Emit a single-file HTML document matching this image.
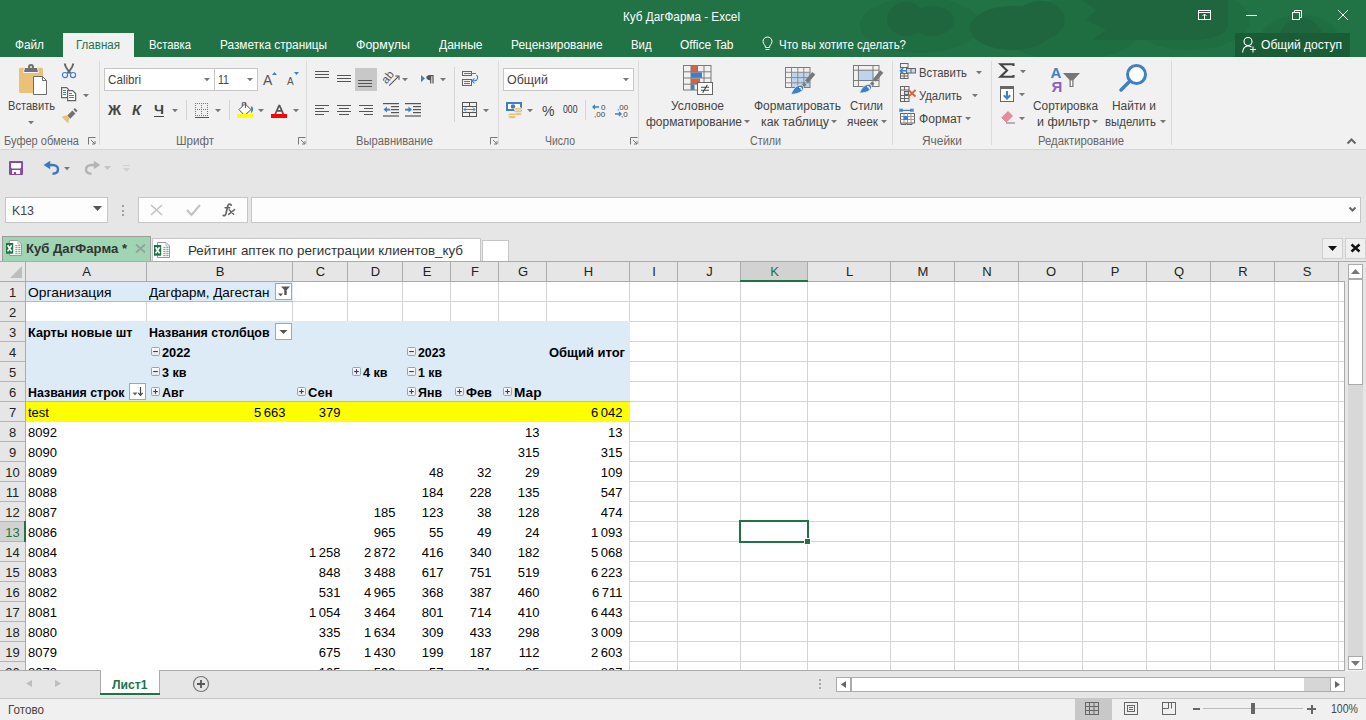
<!DOCTYPE html><html><head><meta charset="utf-8"><style>
*{margin:0;padding:0}
html,body{width:1366px;height:720px;overflow:hidden;background:#F3F3F3}
body{position:relative;font-family:"Liberation Sans",sans-serif}
.f{position:absolute;white-space:nowrap;transform-origin:0 0}
.r{position:absolute;white-space:nowrap}
.c{position:absolute;text-align:center;white-space:nowrap}
svg{overflow:visible}
</style></head><body><div style="position:absolute;left:0px;top:0px;width:1366px;height:57px;background:#217346;overflow:hidden"></div>
<svg style="position:absolute;left:860px;top:0px;" width="506" height="57" viewBox="0 0 506 57"><g fill="#1F6A40" opacity="0.55"><ellipse cx="60" cy="25" rx="60" ry="28"></ellipse><ellipse cx="210" cy="30" rx="70" ry="30"></ellipse><ellipse cx="330" cy="20" rx="60" ry="30"></ellipse><ellipse cx="440" cy="40" rx="40" ry="25"></ellipse></g><g fill="#1F663F"><ellipse cx="46" cy="19" rx="19" ry="17"></ellipse><ellipse cx="72" cy="21" rx="22" ry="15"></ellipse><ellipse cx="152" cy="28" rx="42" ry="22"></ellipse><ellipse cx="180" cy="20" rx="25" ry="19"></ellipse><path d="M222 0 H368 V24 C368 35 352 40 330 40 H232 L246 30 L226 20 L236 10 Z"></path><ellipse cx="441" cy="40" rx="22" ry="22"></ellipse></g></svg>
<span class="f" style="left: 623px; top: 10.84px; font-size: 12px; line-height: 12px; color: rgb(255, 255, 255); transform: scaleX(0.9756);">Куб ДагФарма - Excel</span>
<svg style="position:absolute;left:1190px;top:0px;" width="176" height="30" viewBox="0 0 176 30"><g fill="none" stroke="#fff" stroke-width="1"><rect x="8.5" y="10.5" width="12" height="9"></rect><line x1="8.5" y1="12.5" x2="20.5" y2="12.5"></line><path d="M14.5 19 V14 M12.5 16 L14.5 14 L16.5 16"></path><line x1="56" y1="15.5" x2="67" y2="15.5"></line><rect x="102.5" y="12.5" width="7" height="7"></rect><path d="M104.5 12.5 V10.5 H111.5 V17.5 H109.5"></path><path d="M148 10 L158 20 M158 10 L148 20"></path></g></svg>
<div style="position:absolute;left:63px;top:33px;width:71px;height:24px;background:#F1F1F1"></div>
<span class="f" style="left: 15px; top: 38.84px; font-size: 12px; line-height: 12px; color: rgb(255, 255, 255); transform: scaleX(0.9825);">Файл</span>
<span class="f" style="left: 76px; top: 38.84px; font-size: 12px; line-height: 12px; color: rgb(33, 115, 70); transform: scaleX(0.9631);">Главная</span>
<span class="f" style="left: 149px; top: 38.84px; font-size: 12px; line-height: 12px; color: rgb(255, 255, 255); transform: scaleX(0.9415);">Вставка</span>
<span class="f" style="left: 220px; top: 38.84px; font-size: 12px; line-height: 12px; color: rgb(255, 255, 255); transform: scaleX(0.9828);">Разметка страницы</span>
<span class="f" style="left: 356px; top: 38.84px; font-size: 12px; line-height: 12px; color: rgb(255, 255, 255); transform: scaleX(1.0341);">Формулы</span>
<span class="f" style="left: 439px; top: 38.84px; font-size: 12px; line-height: 12px; color: rgb(255, 255, 255); transform: scaleX(1.0032);">Данные</span>
<span class="f" style="left: 511px; top: 38.84px; font-size: 12px; line-height: 12px; color: rgb(255, 255, 255); transform: scaleX(0.9874);">Рецензирование</span>
<span class="f" style="left: 631px; top: 38.84px; font-size: 12px; line-height: 12px; color: rgb(255, 255, 255); transform: scaleX(0.9439);">Вид</span>
<span class="f" style="left: 680px; top: 38.84px; font-size: 12px; line-height: 12px; color: rgb(255, 255, 255); transform: scaleX(0.9983);">Office Tab</span>
<svg style="position:absolute;left:760px;top:36px;" width="16" height="16" viewBox="0 0 16 16"><g fill="none" stroke="#fff" stroke-width="1"><path d="M5.5 11.5 C5.5 9 3 8 3 5.5 A4.5 4.5 0 0 1 12 5.5 C12 8 9.5 9 9.5 11.5 Z"></path><line x1="5.5" y1="13.5" x2="9.5" y2="13.5"></line></g></svg>
<span class="f" style="left: 779px; top: 38.84px; font-size: 12px; line-height: 12px; color: rgb(255, 255, 255); transform: scaleX(0.9574);">Что вы хотите сделать?</span>
<div style="position:absolute;left:1235px;top:33px;width:115px;height:24px;background:#1A5C36"></div>
<svg style="position:absolute;left:1240px;top:36px;" width="20" height="18" viewBox="0 0 20 18"><g fill="none" stroke="#fff" stroke-width="1.1"><circle cx="8" cy="5.5" r="4"></circle><path d="M2.5 16.5 C3 12 5 10 8 10 C9.5 10 10.5 10.5 11.5 11"></path><path d="M13 10.5 V16.5 M10 13.5 H16"></path></g></svg>
<span class="f" style="left: 1261px; top: 38.84px; font-size: 12px; line-height: 12px; color: rgb(255, 255, 255); transform: scaleX(1.0047);">Общий доступ</span>
<div style="position:absolute;left:0px;top:57px;width:1366px;height:92px;background:#F1F1F1"></div>
<div style="position:absolute;left:0px;top:149px;width:1366px;height:1px;background:#D5D5D5"></div>
<div style="position:absolute;left:99px;top:61px;width:1px;height:84px;background:#DADADA"></div>
<div style="position:absolute;left:306px;top:61px;width:1px;height:84px;background:#DADADA"></div>
<div style="position:absolute;left:498px;top:61px;width:1px;height:84px;background:#DADADA"></div>
<div style="position:absolute;left:638px;top:61px;width:1px;height:84px;background:#DADADA"></div>
<div style="position:absolute;left:892px;top:61px;width:1px;height:84px;background:#DADADA"></div>
<div style="position:absolute;left:991px;top:61px;width:1px;height:84px;background:#DADADA"></div>
<div style="position:absolute;left:1171px;top:61px;width:1px;height:84px;background:#DADADA"></div>
<span class="f" style="left: 4px; top: 134.84px; font-size: 12px; line-height: 12px; color: rgb(102, 102, 102); transform: scaleX(0.9197);">Буфер обмена</span>
<span class="f" style="left: 176px; top: 134.84px; font-size: 12px; line-height: 12px; color: rgb(102, 102, 102); transform: scaleX(0.9624);">Шрифт</span>
<span class="f" style="left: 356px; top: 134.84px; font-size: 12px; line-height: 12px; color: rgb(102, 102, 102); transform: scaleX(0.9321);">Выравнивание</span>
<span class="f" style="left: 545px; top: 134.84px; font-size: 12px; line-height: 12px; color: rgb(102, 102, 102); transform: scaleX(0.8692);">Число</span>
<span class="f" style="left: 750px; top: 134.84px; font-size: 12px; line-height: 12px; color: rgb(102, 102, 102); transform: scaleX(0.8965);">Стили</span>
<span class="f" style="left: 922px; top: 134.84px; font-size: 12px; line-height: 12px; color: rgb(102, 102, 102); transform: scaleX(0.9938);">Ячейки</span>
<span class="f" style="left: 1038px; top: 134.84px; font-size: 12px; line-height: 12px; color: rgb(102, 102, 102); transform: scaleX(0.9407);">Редактирование</span>
<svg style="position:absolute;left:88px;top:137px;" width="8" height="8" viewBox="0 0 8 8"><g fill="none" stroke="#777" stroke-width="1"><path d="M0.5 7.5 V0.5 H7.5"></path><path d="M3 3 L7 7 M7 4 V7 H4"></path></g></svg>
<svg style="position:absolute;left:298px;top:137px;" width="8" height="8" viewBox="0 0 8 8"><g fill="none" stroke="#777" stroke-width="1"><path d="M0.5 7.5 V0.5 H7.5"></path><path d="M3 3 L7 7 M7 4 V7 H4"></path></g></svg>
<svg style="position:absolute;left:490px;top:137px;" width="8" height="8" viewBox="0 0 8 8"><g fill="none" stroke="#777" stroke-width="1"><path d="M0.5 7.5 V0.5 H7.5"></path><path d="M3 3 L7 7 M7 4 V7 H4"></path></g></svg>
<svg style="position:absolute;left:630px;top:137px;" width="8" height="8" viewBox="0 0 8 8"><g fill="none" stroke="#777" stroke-width="1"><path d="M0.5 7.5 V0.5 H7.5"></path><path d="M3 3 L7 7 M7 4 V7 H4"></path></g></svg>
<svg style="position:absolute;left:1346px;top:137px;" width="12" height="8" viewBox="0 0 12 8"><path d="M1.5 6.5 L5.5 2.5 L9.5 6.5" fill="none" stroke="#666" stroke-width="2"></path></svg>
<svg style="position:absolute;left:17px;top:63px;" width="32" height="33" viewBox="0 0 32 33"><rect x="2" y="4.7" width="24" height="25.3" rx="1.5" fill="#EBC17A"></rect><path d="M6.5 9.5 L7.5 4.5 H20.5 L21.5 9.5 Z" fill="#717171" stroke="#F3F3F3" stroke-width="1"></path><circle cx="14" cy="4" r="3" fill="#717171"></circle><circle cx="14" cy="4" r="1" fill="#F3F3F3"></circle><path d="M16.5 13.5 H25.5 L29.5 17.5 V31.5 H16.5 Z" fill="#fff" stroke="#6D6D6D" stroke-width="1"></path><path d="M25.5 13.5 V17.5 H29.5" fill="none" stroke="#6D6D6D" stroke-width="1"></path></svg>
<span class="f" style="left: 8px; top: 99.84px; font-size: 12px; line-height: 12px; color: rgb(68, 68, 68); transform: scaleX(0.9238);">Вставить</span>
<svg style="position:absolute;left:28px;top:120.5px;" width="6" height="4" viewBox="0 0 6 4"><path d="M0 0 H6 L3 3.2 Z" fill="#777"></path></svg>
<svg style="position:absolute;left:61px;top:62px;" width="16" height="17" viewBox="0 0 16 17"><path d="M3.8 1.5 C4.2 5 6.5 8 9.6 11.2 M12.2 1.5 C11.8 5 9.5 8 6.4 11.2" fill="none" stroke="#666" stroke-width="2"></path><g fill="none" stroke="#3F7FC5" stroke-width="1.2"><circle cx="4" cy="13.1" r="2.6"></circle><circle cx="12" cy="13.1" r="2.6"></circle></g></svg>
<svg style="position:absolute;left:60px;top:86px;" width="17" height="16" viewBox="0 0 17 16"><g fill="#fff" stroke="#666" stroke-width="1.2"><path d="M1.6 1.6 H6.6 L8.6 3.6 V11.6 H1.6 Z"></path><path d="M7.6 4.6 H12.6 L15.6 7.6 V14.6 H7.6 Z"></path></g><g stroke="#3F7FC5" stroke-width="1"><path d="M3 4.5 H6 M3 6.5 H6 M3 8.5 H6 M9 7.5 H12 M9 9.5 H14 M9 11.5 H14"></path></g></svg>
<svg style="position:absolute;left:83px;top:93.5px;" width="6" height="4" viewBox="0 0 6 4"><path d="M0 0 H6 L3 3.2 Z" fill="#777"></path></svg>
<svg style="position:absolute;left:60px;top:108px;" width="18" height="17" viewBox="0 0 18 17"><path d="M1.5 8.7 L6.5 7.2 L9.6 10.4 L8 15.3 Z" fill="#EBC17A"></path><path d="M7.3 7.6 L12.4 2.6 L15.4 5.6 L10.3 10.7 Z" fill="#717171"></path><path d="M13.4 1.6 L14.9 0.1 L17.6 2.8 L16.1 4.3 Z" fill="#717171"></path></svg>
<div style="position:absolute;left:104px;top:68px;width:111px;height:23px;background:#fff;border:1px solid #C6C6C6;box-sizing:border-box"></div>
<div style="position:absolute;left:214px;top:68px;width:44px;height:23px;background:#fff;border:1px solid #C6C6C6;box-sizing:border-box"></div>
<span class="f" style="left: 108px; top: 73px; font-size: 13px; line-height: 13px; color: rgb(68, 68, 68); transform: scaleX(0.8957);">Calibri</span>
<span class="f" style="left: 218px; top: 73px; font-size: 13px; line-height: 13px; color: rgb(68, 68, 68); transform: scaleX(0.8148);">11</span>
<svg style="position:absolute;left:204px;top:77.5px;" width="6" height="4" viewBox="0 0 6 4"><path d="M0 0 H6 L3 3.2 Z" fill="#777"></path></svg>
<svg style="position:absolute;left:247px;top:77.5px;" width="6" height="4" viewBox="0 0 6 4"><path d="M0 0 H6 L3 3.2 Z" fill="#777"></path></svg>
<svg style="position:absolute;left:262px;top:70px;" width="40" height="20" viewBox="0 0 40 20"><text x="1" y="15" font-family="Liberation Sans" font-size="14" fill="#555">A</text><path d="M10 5 L12.5 2 L15 5 Z" fill="#3F7FC5"></path><text x="25" y="15" font-family="Liberation Sans" font-size="10" fill="#555">A</text><path d="M32 2 H37 L34.5 5 Z" fill="#3F7FC5"></path></svg>
<span class="f" style="left: 108px; top: 103.15px; font-size: 14px; line-height: 14px; color: rgb(68, 68, 68); font-weight: bold; transform: scaleX(1.0272);">Ж</span>
<span class="f" style="left: 132px; top: 103.15px; font-size: 14px; line-height: 14px; color: rgb(68, 68, 68); font-weight: bold; font-style: italic; transform: scaleX(1.0454);">К</span>
<span class="f" style="left: 154px; top: 103px; font-size: 13px; line-height: 13px; color: rgb(68, 68, 68); font-weight: bold; transform: scaleX(1.094);">Ч</span>
<div style="position:absolute;left:154px;top:116px;width:10px;height:1px;background:#444"></div>
<svg style="position:absolute;left:172px;top:108.5px;" width="6" height="4" viewBox="0 0 6 4"><path d="M0 0 H6 L3 3.2 Z" fill="#777"></path></svg>
<div style="position:absolute;left:186px;top:100px;width:1px;height:20px;background:#D5D5D5"></div>
<svg style="position:absolute;left:195px;top:103px;" width="14" height="15" viewBox="0 0 14 15"><g fill="#777"><rect x="0" y="0" width="1" height="1"></rect><rect x="0" y="6" width="1" height="1"></rect><rect x="0" y="12" width="1" height="1"></rect><rect x="2" y="0" width="1" height="1"></rect><rect x="2" y="6" width="1" height="1"></rect><rect x="2" y="12" width="1" height="1"></rect><rect x="4" y="0" width="1" height="1"></rect><rect x="4" y="6" width="1" height="1"></rect><rect x="4" y="12" width="1" height="1"></rect><rect x="6" y="0" width="1" height="1"></rect><rect x="6" y="6" width="1" height="1"></rect><rect x="6" y="12" width="1" height="1"></rect><rect x="8" y="0" width="1" height="1"></rect><rect x="8" y="6" width="1" height="1"></rect><rect x="8" y="12" width="1" height="1"></rect><rect x="10" y="0" width="1" height="1"></rect><rect x="10" y="6" width="1" height="1"></rect><rect x="10" y="12" width="1" height="1"></rect><rect x="12" y="0" width="1" height="1"></rect><rect x="12" y="6" width="1" height="1"></rect><rect x="12" y="12" width="1" height="1"></rect><rect x="0" y="0" width="1" height="1"></rect><rect x="6" y="0" width="1" height="1"></rect><rect x="12" y="0" width="1" height="1"></rect><rect x="0" y="2" width="1" height="1"></rect><rect x="6" y="2" width="1" height="1"></rect><rect x="12" y="2" width="1" height="1"></rect><rect x="0" y="4" width="1" height="1"></rect><rect x="6" y="4" width="1" height="1"></rect><rect x="12" y="4" width="1" height="1"></rect><rect x="0" y="6" width="1" height="1"></rect><rect x="6" y="6" width="1" height="1"></rect><rect x="12" y="6" width="1" height="1"></rect><rect x="0" y="8" width="1" height="1"></rect><rect x="6" y="8" width="1" height="1"></rect><rect x="12" y="8" width="1" height="1"></rect><rect x="0" y="10" width="1" height="1"></rect><rect x="6" y="10" width="1" height="1"></rect><rect x="12" y="10" width="1" height="1"></rect><rect x="0" y="12" width="1" height="1"></rect><rect x="6" y="12" width="1" height="1"></rect><rect x="12" y="12" width="1" height="1"></rect></g><rect x="0" y="14" width="14" height="1" fill="#555"></rect></svg>
<svg style="position:absolute;left:215px;top:108.5px;" width="6" height="4" viewBox="0 0 6 4"><path d="M0 0 H6 L3 3.2 Z" fill="#777"></path></svg>
<div style="position:absolute;left:229px;top:100px;width:1px;height:20px;background:#D5D5D5"></div>
<svg style="position:absolute;left:236px;top:100px;" width="18" height="18" viewBox="0 0 18 18"><path d="M3 9.6 L8.9 3.7 L15 9.6 L8.6 15.5 Z" fill="#fff" stroke="#555" stroke-width="1" stroke-dasharray="none"></path><path d="M6.3 6.2 V2.7 H9.8 V5.2 M9.4 3 V8" fill="none" stroke="#555" stroke-width="1"></path><path d="M14.8 6 C16.8 6.5 17.8 8.7 16.8 11 L14.8 13.5 C15.3 11 15.3 8 14.8 6 Z" fill="#3F7FC5"></path><rect x="1" y="14" width="16" height="4" fill="#FFFF00"></rect></svg>
<svg style="position:absolute;left:258px;top:108.5px;" width="6" height="4" viewBox="0 0 6 4"><path d="M0 0 H6 L3 3.2 Z" fill="#777"></path></svg>
<svg style="position:absolute;left:270px;top:100px;" width="18" height="18" viewBox="0 0 18 18"><path d="M5.3 14 L9.3 5 L13.3 14 M6.8 10.8 H11.8" fill="none" stroke="#555" stroke-width="1.8" stroke-linejoin="bevel"></path><rect x="1" y="14" width="16" height="4" fill="#FF0000"></rect></svg>
<svg style="position:absolute;left:293px;top:108.5px;" width="6" height="4" viewBox="0 0 6 4"><path d="M0 0 H6 L3 3.2 Z" fill="#777"></path></svg>
<div style="position:absolute;left:355px;top:68px;width:22px;height:23px;background:#C8C8C8"></div>
<svg style="position:absolute;left:315px;top:71px;" width="16" height="10" viewBox="0 0 16 10"><rect x="0" y="0" width="14" height="1" fill="#555"></rect><rect x="0" y="3" width="14" height="1" fill="#555"></rect><rect x="0" y="6" width="14" height="1" fill="#555"></rect></svg>
<svg style="position:absolute;left:337px;top:75px;" width="16" height="10" viewBox="0 0 16 10"><rect x="0" y="0" width="14" height="1" fill="#555"></rect><rect x="0" y="3" width="14" height="1" fill="#555"></rect><rect x="0" y="6" width="14" height="1" fill="#555"></rect></svg>
<svg style="position:absolute;left:358px;top:80px;" width="16" height="10" viewBox="0 0 16 10"><rect x="0" y="0" width="14" height="1" fill="#555"></rect><rect x="0" y="3" width="14" height="1" fill="#555"></rect><rect x="0" y="6" width="14" height="1" fill="#555"></rect></svg>
<svg style="position:absolute;left:382px;top:70px;" width="18" height="18" viewBox="0 0 18 18"><text x="0" y="0" font-family="Liberation Sans" font-size="11.5" fill="#555" transform="translate(4.5 14.5) rotate(-50)">ab</text><path d="M7.2 15.6 L16.5 6.3" stroke="#555" stroke-width="1.1" fill="none"></path><path d="M13.2 6 H17 V9.8" stroke="#555" stroke-width="1.1" fill="none"></path></svg>
<svg style="position:absolute;left:402px;top:77.5px;" width="6" height="4" viewBox="0 0 6 4"><path d="M0 0 H6 L3 3.2 Z" fill="#777"></path></svg>
<svg style="position:absolute;left:420px;top:71px;" width="14" height="14" viewBox="0 0 14 14"><path d="M1 4 L5 7.6 L1 11.2 Z" fill="#3F7FC5"></path><path d="M10 4 H13.6 V12.5 H12.4 V5.2 H11.3 V12.5 H10.1 V9.2 C7.6 9.2 6.3 8 6.3 6.6 C6.3 5 7.6 4 10 4 Z" fill="#555"></path></svg>
<svg style="position:absolute;left:440px;top:77.5px;" width="6" height="4" viewBox="0 0 6 4"><path d="M0 0 H6 L3 3.2 Z" fill="#777"></path></svg>
<div style="position:absolute;left:454px;top:67px;width:1px;height:55px;background:#D5D5D5"></div>
<svg style="position:absolute;left:461px;top:70px;" width="18" height="17" viewBox="0 0 18 17"><g fill="none" stroke="#666" stroke-width="1"><rect x="1.5" y="1.5" width="9" height="4"></rect><rect x="1.5" y="9.5" width="9" height="6"></rect></g><g stroke="#3F7FC5" fill="none" stroke-width="1.1"><path d="M3 3.5 H15 M3 11.5 H9 M3 13.5 H9"></path><path d="M15.5 5 C17.5 6.5 17 10.5 13.5 10.8 H11.5"></path><path d="M13.5 8.3 L11 10.8 L13.5 13.3"></path></g></svg>
<svg style="position:absolute;left:315px;top:105px;" width="16" height="13" viewBox="0 0 16 13"><rect x="0" y="0" width="14" height="1" fill="#555"></rect><rect x="0" y="3" width="9" height="1" fill="#555"></rect><rect x="0" y="6" width="14" height="1" fill="#555"></rect><rect x="0" y="9" width="9" height="1" fill="#555"></rect></svg>
<svg style="position:absolute;left:337px;top:105px;" width="16" height="13" viewBox="0 0 16 13"><rect x="0" y="0" width="14" height="1" fill="#555"></rect><rect x="2" y="3" width="10" height="1" fill="#555"></rect><rect x="0" y="6" width="14" height="1" fill="#555"></rect><rect x="2" y="9" width="10" height="1" fill="#555"></rect></svg>
<svg style="position:absolute;left:359px;top:105px;" width="16" height="13" viewBox="0 0 16 13"><rect x="0" y="0" width="14" height="1" fill="#555"></rect><rect x="5" y="3" width="9" height="1" fill="#555"></rect><rect x="0" y="6" width="14" height="1" fill="#555"></rect><rect x="5" y="9" width="9" height="1" fill="#555"></rect></svg>
<svg style="position:absolute;left:383px;top:102px;" width="17" height="15" viewBox="0 0 17 15"><g fill="#555"><rect x="0" y="1" width="16" height="1.2"></rect><rect x="8" y="4" width="8" height="1.2"></rect><rect x="8" y="7" width="8" height="1.2"></rect><rect x="8" y="10" width="8" height="1.2"></rect><rect x="0" y="13.4" width="16" height="1.2"></rect></g><path d="M0.5 7.6 L4 4.6 V10.6 Z" fill="#3F7FC5"></path><rect x="3" y="6.7" width="4.2" height="1.9" fill="#3F7FC5"></rect></svg>
<svg style="position:absolute;left:405px;top:102px;" width="17" height="15" viewBox="0 0 17 15"><g fill="#555"><rect x="0" y="1" width="16" height="1.2"></rect><rect x="8" y="4" width="8" height="1.2"></rect><rect x="8" y="7" width="8" height="1.2"></rect><rect x="8" y="10" width="8" height="1.2"></rect><rect x="0" y="13.4" width="16" height="1.2"></rect></g><path d="M7 7.6 L3.5 4.6 V10.6 Z" fill="#3F7FC5"></path><rect x="0" y="6.7" width="4.2" height="1.9" fill="#3F7FC5"></rect></svg>
<svg style="position:absolute;left:461px;top:101px;" width="17" height="17" viewBox="0 0 17 17"><g fill="none" stroke="#555" stroke-width="1"><rect x="1.5" y="1.5" width="14" height="14"></rect><path d="M1.5 5.5 H15.5 M1.5 11.5 H15.5 M8.5 1.5 V5.5 M8.5 11.5 V15.5"></path></g><path d="M3 8.5 H14 M5 6.5 L3 8.5 L5 10.5 M12 6.5 L14 8.5 L12 10.5" stroke="#3F7FC5" fill="none"></path></svg>
<svg style="position:absolute;left:483px;top:108.5px;" width="6" height="4" viewBox="0 0 6 4"><path d="M0 0 H6 L3 3.2 Z" fill="#777"></path></svg>
<div style="position:absolute;left:503px;top:68px;width:131px;height:23px;background:#fff;border:1px solid #C6C6C6;box-sizing:border-box"></div>
<span class="f" style="left: 507px; top: 73px; font-size: 13px; line-height: 13px; color: rgb(68, 68, 68); transform: scaleX(0.9584);">Общий</span>
<svg style="position:absolute;left:623px;top:77.5px;" width="6" height="4" viewBox="0 0 6 4"><path d="M0 0 H6 L3 3.2 Z" fill="#777"></path></svg>
<svg style="position:absolute;left:505px;top:101px;" width="18" height="18" viewBox="0 0 18 18"><rect x="1" y="1" width="16" height="9" fill="#3F7FC5"></rect><rect x="3" y="3" width="12" height="5" fill="#fff"></rect><circle cx="8" cy="5.5" r="2.3" fill="#3F7FC5"></circle><g fill="#EBC17A" stroke="#F1F1F1" stroke-width="0.7"><ellipse cx="13" cy="8" rx="4" ry="1.6"></ellipse><ellipse cx="13" cy="10.5" rx="4" ry="1.6"></ellipse><ellipse cx="13" cy="13" rx="4" ry="1.6"></ellipse><ellipse cx="7" cy="13.5" rx="4" ry="1.6"></ellipse><ellipse cx="7" cy="16" rx="4" ry="1.6"></ellipse></g></svg>
<svg style="position:absolute;left:527px;top:108.5px;" width="6" height="4" viewBox="0 0 6 4"><path d="M0 0 H6 L3 3.2 Z" fill="#777"></path></svg>
<span class="f" style="left: 542px; top: 103.3px; font-size: 15px; line-height: 15px; color: rgb(68, 68, 68); transform: scaleX(0.9368);">%</span>
<span class="f" style="left: 563px; top: 104.53px; font-size: 10px; line-height: 10px; color: rgb(51, 51, 51); transform: scaleX(0.8689);">000</span>
<div style="position:absolute;left:585px;top:100px;width:1px;height:20px;background:#D5D5D5"></div>
<svg style="position:absolute;left:592px;top:103px;" width="16" height="15" viewBox="0 0 16 15"><path d="M1 4 H7 M3 2 L1 4 L3 6" stroke="#3F7FC5" fill="none" stroke-width="1.3"></path><text x="9" y="7" font-family="Liberation Sans" font-size="8" fill="#444">0</text><text x="2" y="14" font-family="Liberation Sans" font-size="8" fill="#444">,00</text></svg>
<svg style="position:absolute;left:614px;top:103px;" width="16" height="15" viewBox="0 0 16 15"><text x="3" y="7" font-family="Liberation Sans" font-size="8" fill="#444">,00</text><path d="M1 11 H7 M5 9 L7 11 L5 13" stroke="#3F7FC5" fill="none" stroke-width="1.3"></path><text x="7" y="14" font-family="Liberation Sans" font-size="8" fill="#444">,0</text></svg>
<svg style="position:absolute;left:682px;top:64px;" width="32" height="32" viewBox="0 0 32 32"><rect x="9" y="2" width="6.5" height="5.8" fill="#D9633F"></rect><rect x="9" y="8.3" width="11" height="5.5" fill="#3F7FC5"></rect><rect x="9" y="14.5" width="9" height="5.5" fill="#D9633F"></rect><rect x="9" y="20.5" width="3.5" height="5.5" fill="#3F7FC5"></rect><g fill="none" stroke="#7A7A7A" stroke-width="1"><rect x="1.5" y="1.5" width="27.5" height="24.5"></rect><path d="M9 1.5 V26 M15.5 1.5 V7.8 M22 1.5 V26 M1.5 7.8 H29 M1.5 14 H29 M1.5 20.2 H29"></path></g><rect x="15.5" y="18.5" width="15" height="12" fill="#fff" stroke="#666"></rect><path d="M19 23.2 H27 M19 26.3 H27 M25.3 20.8 L20.7 28.7" stroke="#444" stroke-width="1.1" fill="none"></path></svg>
<span class="f" style="left: 671px; top: 99.84px; font-size: 12px; line-height: 12px; color: rgb(68, 68, 68); transform: scaleX(1.0003);">Условное</span>
<span class="f" style="left: 646px; top: 115.84px; font-size: 12px; line-height: 12px; color: rgb(68, 68, 68); transform: scaleX(0.9963);">форматирование</span>
<svg style="position:absolute;left:743.5px;top:120.0px;" width="6" height="4" viewBox="0 0 6 4"><path d="M0 0 H6 L3 3.2 Z" fill="#777"></path></svg>
<svg style="position:absolute;left:784px;top:66px;" width="32" height="30" viewBox="0 0 32 30"><rect x="7.5" y="6.3" width="18.5" height="15.2" fill="#BDD4EE"></rect><g fill="none" stroke="#7A7A7A" stroke-width="1"><rect x="1.5" y="1.5" width="24.5" height="20"></rect><path d="M7.5 1.5 V21.5 M13.8 1.5 V21.5 M19.8 1.5 V21.5 M1.5 6.3 H26 M1.5 11.6 H26 M1.5 16.8 H26" stroke="#8A8A8A"></path></g><path d="M22.5 15.8 L29.8 7.2" stroke="#777" stroke-width="4"></path><path d="M19.2 20 L21.2 17.6" stroke="#777" stroke-width="3.2"></path><path d="M7 28.3 C9 23 13 18.5 17.5 19 C20 20 20 23 18 25 C15 27.5 11 28.3 7 28.3 Z" fill="#3F7FC5" stroke="#F1F1F1" stroke-width="0.8"></path><path d="M15 21.5 C17 21 18 22.5 17 24" stroke="#fff" stroke-width="1.2" fill="none"></path></svg>
<span class="f" style="left: 754px; top: 99.84px; font-size: 12px; line-height: 12px; color: rgb(68, 68, 68); transform: scaleX(0.9991);">Форматировать</span>
<span class="f" style="left: 761px; top: 115.84px; font-size: 12px; line-height: 12px; color: rgb(68, 68, 68); transform: scaleX(1.0347);">как таблицу</span>
<svg style="position:absolute;left:830.5px;top:120.0px;" width="6" height="4" viewBox="0 0 6 4"><path d="M0 0 H6 L3 3.2 Z" fill="#777"></path></svg>
<svg style="position:absolute;left:852px;top:64px;" width="32" height="31" viewBox="0 0 32 31"><rect x="6.4" y="6.2" width="14.6" height="10.3" fill="#BDD4EE"></rect><g fill="none" stroke="#7A7A7A" stroke-width="1"><rect x="1.5" y="1.5" width="25.5" height="21"></rect><path d="M6.4 1.5 V22.5 M21 1.5 V22.5 M1.5 6.2 H27 M1.5 16.5 H27"></path></g><path d="M22.3 16.5 L29.8 7.5" stroke="#777" stroke-width="4"></path><path d="M19.2 20.8 L21.2 18.4" stroke="#777" stroke-width="3.2"></path><path d="M7.5 29 C9.5 24 13 20 17.5 20.3 C20 21 20 24 18 26 C15 28.5 11.5 29 7.5 29 Z" fill="#3F7FC5" stroke="#F1F1F1" stroke-width="0.8"></path><path d="M15 22.8 C17 22.3 18 23.8 17 25.3" stroke="#fff" stroke-width="1.2" fill="none"></path></svg>
<span class="f" style="left: 850px; top: 99.84px; font-size: 12px; line-height: 12px; color: rgb(68, 68, 68); transform: scaleX(0.9544);">Стили</span>
<span class="f" style="left: 847px; top: 115.84px; font-size: 12px; line-height: 12px; color: rgb(68, 68, 68); transform: scaleX(0.9885);">ячеек</span>
<svg style="position:absolute;left:880.5px;top:120.0px;" width="6" height="4" viewBox="0 0 6 4"><path d="M0 0 H6 L3 3.2 Z" fill="#777"></path></svg>
<svg style="position:absolute;left:899px;top:63px;" width="18" height="17" viewBox="0 0 18 17"><g fill="none" stroke="#666" stroke-width="1"><rect x="1.5" y="0.5" width="7.5" height="4"></rect><rect x="1.5" y="10.5" width="7.5" height="5"></rect><path d="M1.5 13 H9 M5.2 10.5 V15.5 M1.5 4.5 V5.5 M1.5 9.5 V10.5"></path></g><rect x="7.5" y="5.5" width="9" height="4.5" fill="#C5D9F1" stroke="#666"></rect><path d="M12 5.5 V10" stroke="#666"></path><path d="M8 7.8 H1.5 M4.2 5 L1.5 7.8 L4.2 10.6" stroke="#3F7FC5" stroke-width="1.6" fill="none"></path></svg>
<span class="f" style="left: 919px; top: 66.84px; font-size: 12px; line-height: 12px; color: rgb(68, 68, 68); transform: scaleX(0.9435);">Вставить</span>
<svg style="position:absolute;left:976px;top:70.5px;" width="6" height="4" viewBox="0 0 6 4"><path d="M0 0 H6 L3 3.2 Z" fill="#777"></path></svg>
<svg style="position:absolute;left:899px;top:85px;" width="18" height="17" viewBox="0 0 18 17"><g fill="none" stroke="#666" stroke-width="1"><rect x="1.5" y="1.5" width="8.5" height="3.5"></rect><path d="M5.5 1.5 V5"></path><rect x="1.5" y="10.5" width="8.5" height="6"></rect><path d="M1.5 13.5 H10 M5.5 10.5 V16.5 M1.5 5 V10.5"></path></g><rect x="5.5" y="6.5" width="4" height="3" fill="#C5D9F1" stroke="#666"></rect><path d="M9.5 5 L16.5 11.5 M16.5 5 L9.5 11.5" stroke="#D9633F" stroke-width="1.8"></path></svg>
<span class="f" style="left: 919px; top: 89.84px; font-size: 12px; line-height: 12px; color: rgb(68, 68, 68); transform: scaleX(0.9383);">Удалить</span>
<svg style="position:absolute;left:972px;top:93.5px;" width="6" height="4" viewBox="0 0 6 4"><path d="M0 0 H6 L3 3.2 Z" fill="#777"></path></svg>
<svg style="position:absolute;left:899px;top:108px;" width="17" height="18" viewBox="0 0 17 18"><g stroke="#3F7FC5" stroke-width="1.2" fill="none"><path d="M1.5 2.3 H13.5 M1 0.5 V4 M14 0.5 V4 M3.5 0.8 L1.8 2.3 L3.5 3.8 M11.5 0.8 L13.2 2.3 L11.5 3.8"></path></g><rect x="1.5" y="5.5" width="14" height="9.5" fill="#fff" stroke="#666"></rect><path d="M1.5 8.5 H15.5 M1.5 11.5 H15.5 M5 5.5 V15 M8.5 5.5 V15 M12 5.5 V15" stroke="#999"></path><rect x="4.5" y="8" width="4.5" height="4" fill="#3F7FC5"></rect><path d="M2 15 V16.5 H7 V15 M8 15 V16.5 H13 V15" stroke="#666" fill="none"></path></svg>
<span class="f" style="left: 919px; top: 112.84px; font-size: 12px; line-height: 12px; color: rgb(68, 68, 68); transform: scaleX(1.0084);">Формат</span>
<svg style="position:absolute;left:965px;top:116.5px;" width="6" height="4" viewBox="0 0 6 4"><path d="M0 0 H6 L3 3.2 Z" fill="#777"></path></svg>
<svg style="position:absolute;left:999px;top:63px;" width="16" height="16" viewBox="0 0 16 16"><path d="M14.5 3 V1.2 H1.5 L8 7.5 L1.5 13.8 H14.5 V12" fill="none" stroke="#444" stroke-width="2.1" stroke-linejoin="miter"></path></svg>
<svg style="position:absolute;left:1020px;top:69.5px;" width="6" height="4" viewBox="0 0 6 4"><path d="M0 0 H6 L3 3.2 Z" fill="#777"></path></svg>
<svg style="position:absolute;left:1000px;top:86px;" width="15" height="17" viewBox="0 0 15 17"><rect x="0.5" y="0.5" width="13" height="15" fill="#fff" stroke="#666"></rect><rect x="0.5" y="0.5" width="13" height="2.5" fill="#666"></rect><path d="M7 5 V12.5 M3.8 9.3 L7 12.5 L10.2 9.3" stroke="#3F7FC5" stroke-width="2" fill="none"></path></svg>
<svg style="position:absolute;left:1019px;top:92.5px;" width="6" height="4" viewBox="0 0 6 4"><path d="M0 0 H6 L3 3.2 Z" fill="#777"></path></svg>
<svg style="position:absolute;left:999px;top:109px;" width="17" height="15" viewBox="0 0 17 15"><path d="M2 9 L9 2 L14 7 L7 14 Z" fill="#E88A9C"></path><path d="M2 9 L7 14" stroke="#fff"></path><path d="M7 14 H16" stroke="#777"></path></svg>
<svg style="position:absolute;left:1019px;top:116.5px;" width="6" height="4" viewBox="0 0 6 4"><path d="M0 0 H6 L3 3.2 Z" fill="#777"></path></svg>
<svg style="position:absolute;left:1050px;top:65px;" width="32" height="28" viewBox="0 0 32 28"><text x="0.5" y="12.5" font-family="Liberation Sans" font-size="15" font-weight="bold" fill="#3F7FC5">A</text><text x="1.5" y="26.5" font-family="Liberation Sans" font-size="15" font-weight="bold" fill="#8E5FC0">Я</text><path d="M13 8 H30 L23.5 15 V22 L19.5 22 V15 Z" fill="#777"></path><path d="M21.5 15.5 V21" stroke="#fff" stroke-width="1.5"></path></svg>
<span class="f" style="left: 1033px; top: 99.84px; font-size: 12px; line-height: 12px; color: rgb(68, 68, 68); transform: scaleX(0.987);">Сортировка</span>
<span class="f" style="left: 1037px; top: 115.84px; font-size: 12px; line-height: 12px; color: rgb(68, 68, 68); transform: scaleX(1.037);">и фильтр</span>
<svg style="position:absolute;left:1091.5px;top:120.0px;" width="6" height="4" viewBox="0 0 6 4"><path d="M0 0 H6 L3 3.2 Z" fill="#777"></path></svg>
<svg style="position:absolute;left:1118px;top:63px;" width="30" height="30" viewBox="0 0 30 30"><circle cx="18.5" cy="11.5" r="9" fill="#fff" stroke="#3F7FC5" stroke-width="3"></circle><path d="M12 18 L3 27" stroke="#3F7FC5" stroke-width="3.5" stroke-linecap="round"></path></svg>
<span class="f" style="left: 1112px; top: 99.84px; font-size: 12px; line-height: 12px; color: rgb(68, 68, 68); transform: scaleX(0.9936);">Найти и</span>
<span class="f" style="left: 1105px; top: 115.84px; font-size: 12px; line-height: 12px; color: rgb(68, 68, 68); transform: scaleX(0.9491);">выделить</span>
<svg style="position:absolute;left:1159.5px;top:120.0px;" width="6" height="4" viewBox="0 0 6 4"><path d="M0 0 H6 L3 3.2 Z" fill="#777"></path></svg>
<div style="position:absolute;left:0px;top:150px;width:1366px;height:112px;background:#E6E6E6"></div>
<svg style="position:absolute;left:9px;top:161px;" width="14" height="14" viewBox="0 0 14 14"><rect x="0" y="0" width="14" height="14" rx="1" fill="#8549A6"></rect><path d="M2.1 1.9 H12.1 V6.3 C12.1 7 11.6 7.4 11 7.4 H3.2 C2.6 7.4 2.1 7 2.1 6.3 Z" fill="#fff"></path><rect x="3.1" y="9" width="8" height="4" fill="#fff"></rect><rect x="4.9" y="11" width="2.2" height="2" fill="#8549A6"></rect></svg>
<svg style="position:absolute;left:42px;top:159px;" width="18" height="17" viewBox="0 0 18 17"><path d="M1.6 6 L8.2 1.8 V10.2 Z" fill="#3B78C3"></path><path d="M7 6 H10.5 C14 6 16 8 16 10.3 C16 12.8 14 14.7 10.5 14.7" fill="none" stroke="#3B78C3" stroke-width="2.4"></path></svg>
<svg style="position:absolute;left:64px;top:166.5px;" width="6" height="4" viewBox="0 0 6 4"><path d="M0 0 H6 L3 3.2 Z" fill="#777"></path></svg>
<svg style="position:absolute;left:84px;top:159px;" width="18" height="17" viewBox="0 0 18 17"><path d="M16.4 6 L9.8 1.8 V10.2 Z" fill="#B4B4B4"></path><path d="M11 6 H7.5 C4 6 2 8 2 10.3 C2 12.8 4 14.7 7.5 14.7" fill="none" stroke="#B4B4B4" stroke-width="2.4"></path></svg>
<svg style="position:absolute;left:104px;top:166px;" width="7" height="4" viewBox="0 0 7 4"><path d="M0 0 H7 L3.5 4 Z" fill="#C4C4C4"></path></svg>
<svg style="position:absolute;left:123px;top:165px;" width="7" height="7" viewBox="0 0 7 7"><path d="M0 0.5 H7" stroke="#D0D0D0"></path><path d="M0 3 H7 L3.5 7 Z" fill="#D0D0D0"></path></svg>
<div style="position:absolute;left:5px;top:197px;width:103px;height:26px;background:#FDFDFD;border:1px solid #C6C6C6;box-sizing:border-box"></div>
<span class="f" style="left: 12px; top: 204px; font-size: 13px; line-height: 13px; color: rgb(68, 68, 68); transform: scaleX(0.9507);">K13</span>
<svg style="position:absolute;left:93px;top:206px;" width="9" height="5" viewBox="0 0 9 5"><path d="M0 0 H9 L4.5 5 Z" fill="#555"></path></svg>
<div style="position:absolute;left:122px;top:205px;width:2px;height:2px;background:#A0A0A0"></div>
<div style="position:absolute;left:122px;top:210px;width:2px;height:2px;background:#A0A0A0"></div>
<div style="position:absolute;left:122px;top:214px;width:2px;height:2px;background:#A0A0A0"></div>
<div style="position:absolute;left:138px;top:197px;width:110px;height:26px;background:#FDFDFD;border:1px solid #C6C6C6;box-sizing:border-box"></div>
<svg style="position:absolute;left:150px;top:204px;" width="13" height="12" viewBox="0 0 13 12"><path d="M1 1 L12 11 M12 1 L1 11" stroke="#C2C2C2" stroke-width="1.6"></path></svg>
<svg style="position:absolute;left:186px;top:204px;" width="15" height="12" viewBox="0 0 15 12"><path d="M1 6 L5.5 11 L14 1" stroke="#C2C2C2" stroke-width="2" fill="none"></path></svg>
<svg style="position:absolute;left:220px;top:202px;" width="18" height="16" viewBox="0 0 18 16"><g fill="none" stroke="#666" stroke-linecap="round"><path d="M11.3 3.2 C10.8 1.8 8.6 1.4 7.9 3.6 L5.9 11.8 C5.4 13.6 4.2 14.2 3.2 13.3" stroke-width="1.7"></path><path d="M5 5.7 H9.8" stroke-width="1.4"></path><path d="M9.2 7.8 L13.6 12.2 M14.6 7.6 L8.6 12.4" stroke-width="1.5"></path></g></svg>
<div style="position:absolute;left:251px;top:197px;width:1110px;height:26px;background:#FDFDFD;border:1px solid #C6C6C6;box-sizing:border-box"></div>
<svg style="position:absolute;left:1348px;top:206px;" width="10" height="7" viewBox="0 0 10 7"><path d="M1.5 1.5 L4.5 4.5 L7.5 1.5" stroke="#666" stroke-width="2" fill="none"></path></svg>
<div style="position:absolute;left:0px;top:261px;width:1366px;height:1px;background:#ABABAB"></div>
<div style="position:absolute;left:2px;top:236px;width:149px;height:25px;background:#A0D5B4;border:1px solid #9C9C9C;border-bottom:none;box-sizing:border-box"></div>
<svg style="position:absolute;left:6px;top:240px;" width="16" height="15" viewBox="0 0 16 15"><path d="M3.5 0.5 H12 L15.5 4 V15.5 H3.5 Z" fill="#fff" stroke="#9A9A9A"></path><path d="M12 0.5 V4 H15.5" fill="none" stroke="#BBB"></path><g fill="#6DB585"><rect x="9.3" y="5" width="2.2" height="1.2"></rect><rect x="12.3" y="5" width="2.2" height="1.2"></rect><rect x="9.3" y="7" width="2.2" height="1.2"></rect><rect x="12.3" y="7" width="2.2" height="1.2"></rect><rect x="9.3" y="9" width="2.2" height="1.2"></rect><rect x="12.3" y="9" width="2.2" height="1.2"></rect><rect x="9.3" y="11" width="2.2" height="1.2"></rect><rect x="12.3" y="11" width="2.2" height="1.2"></rect><rect x="9.3" y="13" width="2.2" height="1.2"></rect><rect x="12.3" y="13" width="2.2" height="1.2"></rect></g><rect x="0" y="3" width="7.2" height="10.7" fill="#1E7145"></rect><path d="M1.6 5.3 L5.6 11.4 M5.6 5.3 L1.6 11.4" stroke="#fff" stroke-width="1.7"></path></svg>
<span class="f" style="left: 26px; top: 242px; font-size: 13px; line-height: 13px; color: rgb(51, 51, 51); font-weight: bold; transform: scaleX(1.0084);">Куб ДагФарма *</span>
<svg style="position:absolute;left:135px;top:244px;" width="11" height="9" viewBox="0 0 11 9"><path d="M1 0.5 L10 8.5 M10 0.5 L1 8.5" stroke="#9E9E9E" stroke-width="1.8"></path></svg>
<div style="position:absolute;left:152px;top:238px;width:329px;height:23px;background:#fff;border:1px solid #C6C6C6;border-bottom:none;box-sizing:border-box"></div>
<svg style="position:absolute;left:154px;top:242px;" width="16" height="15" viewBox="0 0 16 15"><path d="M3.5 0.5 H12 L15.5 4 V15.5 H3.5 Z" fill="#fff" stroke="#9A9A9A"></path><path d="M12 0.5 V4 H15.5" fill="none" stroke="#BBB"></path><g fill="#6DB585"><rect x="9.3" y="5" width="2.2" height="1.2"></rect><rect x="12.3" y="5" width="2.2" height="1.2"></rect><rect x="9.3" y="7" width="2.2" height="1.2"></rect><rect x="12.3" y="7" width="2.2" height="1.2"></rect><rect x="9.3" y="9" width="2.2" height="1.2"></rect><rect x="12.3" y="9" width="2.2" height="1.2"></rect><rect x="9.3" y="11" width="2.2" height="1.2"></rect><rect x="12.3" y="11" width="2.2" height="1.2"></rect><rect x="9.3" y="13" width="2.2" height="1.2"></rect><rect x="12.3" y="13" width="2.2" height="1.2"></rect></g><rect x="0" y="3" width="7.2" height="10.7" fill="#1E7145"></rect><path d="M1.6 5.3 L5.6 11.4 M5.6 5.3 L1.6 11.4" stroke="#fff" stroke-width="1.7"></path></svg>
<span class="f" style="left: 188px; top: 244px; font-size: 13px; line-height: 13px; color: rgb(51, 51, 51); transform: scaleX(1.03);">Рейтинг аптек по регистрации клиентов_куб</span>
<div style="position:absolute;left:482px;top:240px;width:27px;height:21px;background:#fff;border:1px solid #C6C6C6;border-bottom:none;box-sizing:border-box"></div>
<div style="position:absolute;left:0px;top:261px;width:1366px;height:1px;background:#ABABAB"></div>
<div style="position:absolute;left:1322px;top:238px;width:21px;height:21px;background:#EFEFEF;border:1px solid #D0D0D0;box-sizing:border-box"></div>
<svg style="position:absolute;left:1328px;top:246px;" width="9" height="5" viewBox="0 0 9 5"><path d="M0 0 H9 L4.5 5 Z" fill="#111"></path></svg>
<div style="position:absolute;left:1345px;top:238px;width:21px;height:21px;background:#EFEFEF;border:1px solid #D0D0D0;box-sizing:border-box"></div>
<svg style="position:absolute;left:1350px;top:243px;" width="11" height="10" viewBox="0 0 11 10"><path d="M1.5 1.5 L9.5 8.5 M9.5 1.5 L1.5 8.5" stroke="#111" stroke-width="2.4"></path></svg>
<div style="position:absolute;left:0px;top:262px;width:1345px;height:408px;background:#fff;overflow:hidden"></div>
<div style="position:absolute;left:0px;top:262px;width:1345px;height:19px;background:#E6E6E6"></div>
<div style="position:absolute;left:0px;top:281px;width:1345px;height:1px;background:#ABABAB"></div>
<div style="position:absolute;left:0px;top:282px;width:25px;height:388px;background:#E6E6E6"></div>
<div style="position:absolute;left:25px;top:262px;width:1px;height:408px;background:#ABABAB"></div>
<svg style="position:absolute;left:10px;top:266px;" width="12" height="12" viewBox="0 0 12 12"><path d="M12 0 V12 H0 Z" fill="#BDBDBD"></path></svg>
<div style="position:absolute;left:146px;top:262px;width:1px;height:19px;background:#ABABAB"></div>
<div style="position:absolute;left:146px;top:282px;width:1px;height:388px;background:#D4D4D4"></div>
<div style="position:absolute;left:292px;top:262px;width:1px;height:19px;background:#ABABAB"></div>
<div style="position:absolute;left:292px;top:282px;width:1px;height:388px;background:#D4D4D4"></div>
<div style="position:absolute;left:347px;top:262px;width:1px;height:19px;background:#ABABAB"></div>
<div style="position:absolute;left:347px;top:282px;width:1px;height:388px;background:#D4D4D4"></div>
<div style="position:absolute;left:402px;top:262px;width:1px;height:19px;background:#ABABAB"></div>
<div style="position:absolute;left:402px;top:282px;width:1px;height:388px;background:#D4D4D4"></div>
<div style="position:absolute;left:450px;top:262px;width:1px;height:19px;background:#ABABAB"></div>
<div style="position:absolute;left:450px;top:282px;width:1px;height:388px;background:#D4D4D4"></div>
<div style="position:absolute;left:498px;top:262px;width:1px;height:19px;background:#ABABAB"></div>
<div style="position:absolute;left:498px;top:282px;width:1px;height:388px;background:#D4D4D4"></div>
<div style="position:absolute;left:546px;top:262px;width:1px;height:19px;background:#ABABAB"></div>
<div style="position:absolute;left:546px;top:282px;width:1px;height:388px;background:#D4D4D4"></div>
<div style="position:absolute;left:629px;top:262px;width:1px;height:19px;background:#ABABAB"></div>
<div style="position:absolute;left:629px;top:282px;width:1px;height:388px;background:#D4D4D4"></div>
<div style="position:absolute;left:677px;top:262px;width:1px;height:19px;background:#ABABAB"></div>
<div style="position:absolute;left:677px;top:282px;width:1px;height:388px;background:#D4D4D4"></div>
<div style="position:absolute;left:740px;top:262px;width:1px;height:19px;background:#ABABAB"></div>
<div style="position:absolute;left:740px;top:282px;width:1px;height:388px;background:#D4D4D4"></div>
<div style="position:absolute;left:807px;top:262px;width:1px;height:19px;background:#ABABAB"></div>
<div style="position:absolute;left:807px;top:282px;width:1px;height:388px;background:#D4D4D4"></div>
<div style="position:absolute;left:890px;top:262px;width:1px;height:19px;background:#ABABAB"></div>
<div style="position:absolute;left:890px;top:282px;width:1px;height:388px;background:#D4D4D4"></div>
<div style="position:absolute;left:954px;top:262px;width:1px;height:19px;background:#ABABAB"></div>
<div style="position:absolute;left:954px;top:282px;width:1px;height:388px;background:#D4D4D4"></div>
<div style="position:absolute;left:1018px;top:262px;width:1px;height:19px;background:#ABABAB"></div>
<div style="position:absolute;left:1018px;top:282px;width:1px;height:388px;background:#D4D4D4"></div>
<div style="position:absolute;left:1082px;top:262px;width:1px;height:19px;background:#ABABAB"></div>
<div style="position:absolute;left:1082px;top:282px;width:1px;height:388px;background:#D4D4D4"></div>
<div style="position:absolute;left:1146px;top:262px;width:1px;height:19px;background:#ABABAB"></div>
<div style="position:absolute;left:1146px;top:282px;width:1px;height:388px;background:#D4D4D4"></div>
<div style="position:absolute;left:1210px;top:262px;width:1px;height:19px;background:#ABABAB"></div>
<div style="position:absolute;left:1210px;top:282px;width:1px;height:388px;background:#D4D4D4"></div>
<div style="position:absolute;left:1274px;top:262px;width:1px;height:19px;background:#ABABAB"></div>
<div style="position:absolute;left:1274px;top:282px;width:1px;height:388px;background:#D4D4D4"></div>
<div style="position:absolute;left:1338px;top:262px;width:1px;height:19px;background:#ABABAB"></div>
<div style="position:absolute;left:1338px;top:282px;width:1px;height:388px;background:#D4D4D4"></div>
<div style="position:absolute;left:26px;top:301px;width:1319px;height:1px;background:#D4D4D4"></div>
<div style="position:absolute;left:0px;top:301px;width:25px;height:1px;background:#B4B4B4"></div>
<div style="position:absolute;left:26px;top:321px;width:1319px;height:1px;background:#D4D4D4"></div>
<div style="position:absolute;left:0px;top:321px;width:25px;height:1px;background:#B4B4B4"></div>
<div style="position:absolute;left:26px;top:341px;width:1319px;height:1px;background:#D4D4D4"></div>
<div style="position:absolute;left:0px;top:341px;width:25px;height:1px;background:#B4B4B4"></div>
<div style="position:absolute;left:26px;top:361px;width:1319px;height:1px;background:#D4D4D4"></div>
<div style="position:absolute;left:0px;top:361px;width:25px;height:1px;background:#B4B4B4"></div>
<div style="position:absolute;left:26px;top:381px;width:1319px;height:1px;background:#D4D4D4"></div>
<div style="position:absolute;left:0px;top:381px;width:25px;height:1px;background:#B4B4B4"></div>
<div style="position:absolute;left:26px;top:401px;width:1319px;height:1px;background:#D4D4D4"></div>
<div style="position:absolute;left:0px;top:401px;width:25px;height:1px;background:#B4B4B4"></div>
<div style="position:absolute;left:26px;top:421px;width:1319px;height:1px;background:#D4D4D4"></div>
<div style="position:absolute;left:0px;top:421px;width:25px;height:1px;background:#B4B4B4"></div>
<div style="position:absolute;left:26px;top:441px;width:1319px;height:1px;background:#D4D4D4"></div>
<div style="position:absolute;left:0px;top:441px;width:25px;height:1px;background:#B4B4B4"></div>
<div style="position:absolute;left:26px;top:461px;width:1319px;height:1px;background:#D4D4D4"></div>
<div style="position:absolute;left:0px;top:461px;width:25px;height:1px;background:#B4B4B4"></div>
<div style="position:absolute;left:26px;top:481px;width:1319px;height:1px;background:#D4D4D4"></div>
<div style="position:absolute;left:0px;top:481px;width:25px;height:1px;background:#B4B4B4"></div>
<div style="position:absolute;left:26px;top:501px;width:1319px;height:1px;background:#D4D4D4"></div>
<div style="position:absolute;left:0px;top:501px;width:25px;height:1px;background:#B4B4B4"></div>
<div style="position:absolute;left:26px;top:521px;width:1319px;height:1px;background:#D4D4D4"></div>
<div style="position:absolute;left:0px;top:521px;width:25px;height:1px;background:#B4B4B4"></div>
<div style="position:absolute;left:26px;top:541px;width:1319px;height:1px;background:#D4D4D4"></div>
<div style="position:absolute;left:0px;top:541px;width:25px;height:1px;background:#B4B4B4"></div>
<div style="position:absolute;left:26px;top:561px;width:1319px;height:1px;background:#D4D4D4"></div>
<div style="position:absolute;left:0px;top:561px;width:25px;height:1px;background:#B4B4B4"></div>
<div style="position:absolute;left:26px;top:581px;width:1319px;height:1px;background:#D4D4D4"></div>
<div style="position:absolute;left:0px;top:581px;width:25px;height:1px;background:#B4B4B4"></div>
<div style="position:absolute;left:26px;top:601px;width:1319px;height:1px;background:#D4D4D4"></div>
<div style="position:absolute;left:0px;top:601px;width:25px;height:1px;background:#B4B4B4"></div>
<div style="position:absolute;left:26px;top:621px;width:1319px;height:1px;background:#D4D4D4"></div>
<div style="position:absolute;left:0px;top:621px;width:25px;height:1px;background:#B4B4B4"></div>
<div style="position:absolute;left:26px;top:641px;width:1319px;height:1px;background:#D4D4D4"></div>
<div style="position:absolute;left:0px;top:641px;width:25px;height:1px;background:#B4B4B4"></div>
<div style="position:absolute;left:26px;top:661px;width:1319px;height:1px;background:#D4D4D4"></div>
<div style="position:absolute;left:0px;top:661px;width:25px;height:1px;background:#B4B4B4"></div>
<div style="position:absolute;left:741px;top:262px;width:66px;height:19px;background:#D2D2D2"></div>
<div style="position:absolute;left:740px;top:280px;width:68px;height:2px;background:#217346"></div>
<span class="c" style="left:26px;width:121px;top:262px;height:19px;line-height:19px;font-size:13px;color:#222">A</span>
<span class="c" style="left:147px;width:146px;top:262px;height:19px;line-height:19px;font-size:13px;color:#222">B</span>
<span class="c" style="left:293px;width:55px;top:262px;height:19px;line-height:19px;font-size:13px;color:#222">C</span>
<span class="c" style="left:348px;width:55px;top:262px;height:19px;line-height:19px;font-size:13px;color:#222">D</span>
<span class="c" style="left:403px;width:48px;top:262px;height:19px;line-height:19px;font-size:13px;color:#222">E</span>
<span class="c" style="left:451px;width:48px;top:262px;height:19px;line-height:19px;font-size:13px;color:#222">F</span>
<span class="c" style="left:499px;width:48px;top:262px;height:19px;line-height:19px;font-size:13px;color:#222">G</span>
<span class="c" style="left:547px;width:83px;top:262px;height:19px;line-height:19px;font-size:13px;color:#222">H</span>
<span class="c" style="left:630px;width:48px;top:262px;height:19px;line-height:19px;font-size:13px;color:#222">I</span>
<span class="c" style="left:678px;width:63px;top:262px;height:19px;line-height:19px;font-size:13px;color:#222">J</span>
<span class="c" style="left:741px;width:67px;top:262px;height:19px;line-height:19px;font-size:13px;color:#217346">K</span>
<span class="c" style="left:808px;width:83px;top:262px;height:19px;line-height:19px;font-size:13px;color:#222">L</span>
<span class="c" style="left:891px;width:64px;top:262px;height:19px;line-height:19px;font-size:13px;color:#222">M</span>
<span class="c" style="left:955px;width:64px;top:262px;height:19px;line-height:19px;font-size:13px;color:#222">N</span>
<span class="c" style="left:1019px;width:64px;top:262px;height:19px;line-height:19px;font-size:13px;color:#222">O</span>
<span class="c" style="left:1083px;width:64px;top:262px;height:19px;line-height:19px;font-size:13px;color:#222">P</span>
<span class="c" style="left:1147px;width:64px;top:262px;height:19px;line-height:19px;font-size:13px;color:#222">Q</span>
<span class="c" style="left:1211px;width:64px;top:262px;height:19px;line-height:19px;font-size:13px;color:#222">R</span>
<span class="c" style="left:1275px;width:64px;top:262px;height:19px;line-height:19px;font-size:13px;color:#222">S</span>
<span class="c" style="left:1339px;width:64px;top:262px;height:19px;line-height:19px;font-size:13px;color:#222">T</span>
<span class="c" style="left:0px;width:25px;top:283px;height:19px;line-height:20px;font-size:13px;color:#222">1</span>
<span class="c" style="left:0px;width:25px;top:303px;height:19px;line-height:20px;font-size:13px;color:#222">2</span>
<span class="c" style="left:0px;width:25px;top:323px;height:19px;line-height:20px;font-size:13px;color:#222">3</span>
<span class="c" style="left:0px;width:25px;top:343px;height:19px;line-height:20px;font-size:13px;color:#222">4</span>
<span class="c" style="left:0px;width:25px;top:363px;height:19px;line-height:20px;font-size:13px;color:#222">5</span>
<span class="c" style="left:0px;width:25px;top:383px;height:19px;line-height:20px;font-size:13px;color:#222">6</span>
<span class="c" style="left:0px;width:25px;top:403px;height:19px;line-height:20px;font-size:13px;color:#222">7</span>
<span class="c" style="left:0px;width:25px;top:423px;height:19px;line-height:20px;font-size:13px;color:#222">8</span>
<span class="c" style="left:0px;width:25px;top:443px;height:19px;line-height:20px;font-size:13px;color:#222">9</span>
<span class="c" style="left:0px;width:25px;top:463px;height:19px;line-height:20px;font-size:13px;color:#222">10</span>
<span class="c" style="left:0px;width:25px;top:483px;height:19px;line-height:20px;font-size:13px;color:#222">11</span>
<span class="c" style="left:0px;width:25px;top:503px;height:19px;line-height:20px;font-size:13px;color:#222">12</span>
<div style="position:absolute;left:0px;top:522px;width:25px;height:19px;background:#D2D2D2"></div>
<div style="position:absolute;left:24px;top:521px;width:2px;height:21px;background:#217346"></div>
<span class="c" style="left:0px;width:25px;top:523px;height:19px;line-height:20px;font-size:13px;color:#217346">13</span>
<span class="c" style="left:0px;width:25px;top:543px;height:19px;line-height:20px;font-size:13px;color:#222">14</span>
<span class="c" style="left:0px;width:25px;top:563px;height:19px;line-height:20px;font-size:13px;color:#222">15</span>
<span class="c" style="left:0px;width:25px;top:583px;height:19px;line-height:20px;font-size:13px;color:#222">16</span>
<span class="c" style="left:0px;width:25px;top:603px;height:19px;line-height:20px;font-size:13px;color:#222">17</span>
<span class="c" style="left:0px;width:25px;top:623px;height:19px;line-height:20px;font-size:13px;color:#222">18</span>
<span class="c" style="left:0px;width:25px;top:643px;height:19px;line-height:20px;font-size:13px;color:#222">19</span>
<span class="c" style="left:0px;width:25px;top:663px;height:19px;line-height:20px;font-size:13px;color:#222">20</span>
<div style="position:absolute;left:26px;top:282px;width:267px;height:19px;background:#DDEBF7"></div>
<div style="position:absolute;left:26px;top:301px;width:267px;height:1px;background:#9BC2E6"></div>
<div style="position:absolute;left:26px;top:321px;width:604px;height:80px;background:#DDEBF7"></div>
<div style="position:absolute;left:26px;top:401px;width:604px;height:1px;background:#9BC2E6"></div>
<div style="position:absolute;left:26px;top:402px;width:604px;height:20px;background:#FFFF00"></div>
<div style="position:absolute;left:26px;top:422px;width:603px;height:248px;background:#fff"></div>
<span class="f" style="left: 28px; top: 286px; font-size: 13px; line-height: 13px; color: rgb(0, 0, 0); transform: scaleX(1.065);">Организация</span>
<span class="f" style="left: 149px; top: 286px; font-size: 13px; line-height: 13px; color: rgb(0, 0, 0); transform: scaleX(1.0341);">Дагфарм, Дагестан</span>
<svg style="position:absolute;left:275px;top:283px;" width="17" height="17" viewBox="0 0 17 17"><rect x="0.5" y="0.5" width="16" height="16" fill="#fff" stroke="#A6A6A6"></rect><path d="M6 3.5 H15 L11.7 7 V12 H9.3 V7 Z" fill="#555"></path><path d="M3 10.5 H8 L5.5 13.2 Z" fill="#555"></path></svg>
<span class="f" style="left: 28px; top: 326px; font-size: 13px; line-height: 13px; color: rgb(0, 0, 0); font-weight: bold; transform: scaleX(0.9756);">Карты новые шт</span>
<span class="f" style="left: 149px; top: 326px; font-size: 13px; line-height: 13px; color: rgb(0, 0, 0); font-weight: bold; transform: scaleX(0.9532);">Названия столбцов</span>
<svg style="position:absolute;left:275px;top:323px;" width="17" height="17" viewBox="0 0 17 17"><rect x="0.5" y="0.5" width="16" height="16" fill="#fff" stroke="#A6A6A6"></rect><path d="M4.5 7 H12.5 L8.5 11 Z" fill="#555"></path></svg>
<span class="f" style="left: 28px; top: 386px; font-size: 13px; line-height: 13px; color: rgb(0, 0, 0); font-weight: bold; transform: scaleX(0.9524);">Названия строк</span>
<svg style="position:absolute;left:129px;top:383px;" width="17" height="17" viewBox="0 0 17 17"><rect x="0.5" y="0.5" width="16" height="16" fill="#fff" stroke="#A6A6A6"></rect><path d="M3.5 9.5 H8.5 L6 12.5 Z" fill="#666"></path><path d="M11.5 4 V12" stroke="#444" stroke-width="1.2"></path><path d="M9.3 9.8 L11.5 12.3 L13.7 9.8" stroke="#444" stroke-width="1.2" fill="none"></path></svg>
<svg style="position:absolute;left:151px;top:347px;" width="9" height="9" viewBox="0 0 9 9"><rect x="0.5" y="0.5" width="8" height="8" rx="1.2" fill="#E9ECF1" stroke="#93A3BF"></rect><rect x="1" y="1" width="7" height="3.5" fill="#F7F8FA"></rect><path d="M2.2 4.5 H6.8" stroke="#2F3D5C" stroke-width="1.1"></path></svg>
<span class="f" style="left: 162px; top: 346px; font-size: 13px; line-height: 13px; color: rgb(0, 0, 0); font-weight: bold; transform: scaleX(0.9854);">2022</span>
<svg style="position:absolute;left:151px;top:367px;" width="9" height="9" viewBox="0 0 9 9"><rect x="0.5" y="0.5" width="8" height="8" rx="1.2" fill="#E9ECF1" stroke="#93A3BF"></rect><rect x="1" y="1" width="7" height="3.5" fill="#F7F8FA"></rect><path d="M2.2 4.5 H6.8" stroke="#2F3D5C" stroke-width="1.1"></path></svg>
<span class="f" style="left: 162px; top: 366px; font-size: 13px; line-height: 13px; color: rgb(0, 0, 0); font-weight: bold; transform: scaleX(0.9667);">3 кв</span>
<svg style="position:absolute;left:151px;top:387px;" width="9" height="9" viewBox="0 0 9 9"><rect x="0.5" y="0.5" width="8" height="8" rx="1.2" fill="#E9ECF1" stroke="#93A3BF"></rect><rect x="1" y="1" width="7" height="3.5" fill="#F7F8FA"></rect><path d="M2.2 4.5 H6.8" stroke="#2F3D5C" stroke-width="1.1"></path><path d="M4.5 2.2 V6.8" stroke="#2F3D5C" stroke-width="1.1"></path></svg>
<span class="f" style="left: 162px; top: 386px; font-size: 13px; line-height: 13px; color: rgb(0, 0, 0); font-weight: bold; transform: scaleX(0.965);">Авг</span>
<svg style="position:absolute;left:297px;top:387px;" width="9" height="9" viewBox="0 0 9 9"><rect x="0.5" y="0.5" width="8" height="8" rx="1.2" fill="#E9ECF1" stroke="#93A3BF"></rect><rect x="1" y="1" width="7" height="3.5" fill="#F7F8FA"></rect><path d="M2.2 4.5 H6.8" stroke="#2F3D5C" stroke-width="1.1"></path><path d="M4.5 2.2 V6.8" stroke="#2F3D5C" stroke-width="1.1"></path></svg>
<span class="f" style="left: 308px; top: 386px; font-size: 13px; line-height: 13px; color: rgb(0, 0, 0); font-weight: bold; transform: scaleX(1.0006);">Сен</span>
<svg style="position:absolute;left:352px;top:367px;" width="9" height="9" viewBox="0 0 9 9"><rect x="0.5" y="0.5" width="8" height="8" rx="1.2" fill="#E9ECF1" stroke="#93A3BF"></rect><rect x="1" y="1" width="7" height="3.5" fill="#F7F8FA"></rect><path d="M2.2 4.5 H6.8" stroke="#2F3D5C" stroke-width="1.1"></path><path d="M4.5 2.2 V6.8" stroke="#2F3D5C" stroke-width="1.1"></path></svg>
<span class="f" style="left: 363px; top: 366px; font-size: 13px; line-height: 13px; color: rgb(0, 0, 0); font-weight: bold; transform: scaleX(0.9667);">4 кв</span>
<svg style="position:absolute;left:407px;top:347px;" width="9" height="9" viewBox="0 0 9 9"><rect x="0.5" y="0.5" width="8" height="8" rx="1.2" fill="#E9ECF1" stroke="#93A3BF"></rect><rect x="1" y="1" width="7" height="3.5" fill="#F7F8FA"></rect><path d="M2.2 4.5 H6.8" stroke="#2F3D5C" stroke-width="1.1"></path></svg>
<span class="f" style="left: 418px; top: 346px; font-size: 13px; line-height: 13px; color: rgb(0, 0, 0); font-weight: bold; transform: scaleX(0.9508);">2023</span>
<svg style="position:absolute;left:407px;top:367px;" width="9" height="9" viewBox="0 0 9 9"><rect x="0.5" y="0.5" width="8" height="8" rx="1.2" fill="#E9ECF1" stroke="#93A3BF"></rect><rect x="1" y="1" width="7" height="3.5" fill="#F7F8FA"></rect><path d="M2.2 4.5 H6.8" stroke="#2F3D5C" stroke-width="1.1"></path></svg>
<span class="f" style="left: 418px; top: 366px; font-size: 13px; line-height: 13px; color: rgb(0, 0, 0); font-weight: bold; transform: scaleX(0.947);">1 кв</span>
<svg style="position:absolute;left:407px;top:387px;" width="9" height="9" viewBox="0 0 9 9"><rect x="0.5" y="0.5" width="8" height="8" rx="1.2" fill="#E9ECF1" stroke="#93A3BF"></rect><rect x="1" y="1" width="7" height="3.5" fill="#F7F8FA"></rect><path d="M2.2 4.5 H6.8" stroke="#2F3D5C" stroke-width="1.1"></path><path d="M4.5 2.2 V6.8" stroke="#2F3D5C" stroke-width="1.1"></path></svg>
<span class="f" style="left: 418px; top: 386px; font-size: 13px; line-height: 13px; color: rgb(0, 0, 0); font-weight: bold; transform: scaleX(0.9529);">Янв</span>
<svg style="position:absolute;left:455px;top:387px;" width="9" height="9" viewBox="0 0 9 9"><rect x="0.5" y="0.5" width="8" height="8" rx="1.2" fill="#E9ECF1" stroke="#93A3BF"></rect><rect x="1" y="1" width="7" height="3.5" fill="#F7F8FA"></rect><path d="M2.2 4.5 H6.8" stroke="#2F3D5C" stroke-width="1.1"></path><path d="M4.5 2.2 V6.8" stroke="#2F3D5C" stroke-width="1.1"></path></svg>
<span class="f" style="left: 466px; top: 386px; font-size: 13px; line-height: 13px; color: rgb(0, 0, 0); font-weight: bold; transform: scaleX(0.9875);">Фев</span>
<svg style="position:absolute;left:503px;top:387px;" width="9" height="9" viewBox="0 0 9 9"><rect x="0.5" y="0.5" width="8" height="8" rx="1.2" fill="#E9ECF1" stroke="#93A3BF"></rect><rect x="1" y="1" width="7" height="3.5" fill="#F7F8FA"></rect><path d="M2.2 4.5 H6.8" stroke="#2F3D5C" stroke-width="1.1"></path><path d="M4.5 2.2 V6.8" stroke="#2F3D5C" stroke-width="1.1"></path></svg>
<span class="f" style="left: 514px; top: 386px; font-size: 13px; line-height: 13px; color: rgb(0, 0, 0); font-weight: bold; transform: scaleX(1.0507);">Мар</span>
<span class="f" style="left: 549px; top: 346px; font-size: 13px; line-height: 13px; color: rgb(0, 0, 0); font-weight: bold; transform: scaleX(0.9967);">Общий итог</span>
<span class="f" style="left:28px;top:406.00px;font-size:13px;line-height:13px;color:#000;">test</span>
<span class="r" style="right:1080.5px;top:406.00px;font-size:13px;line-height:13px;color:#000">5 663</span>
<span class="r" style="right:1025.5px;top:406.00px;font-size:13px;line-height:13px;color:#000">379</span>
<span class="r" style="right:743.5px;top:406.00px;font-size:13px;line-height:13px;color:#000">6 042</span>
<span class="f" style="left:28px;top:426.00px;font-size:13px;line-height:13px;color:#000;">8092</span>
<span class="r" style="right:826.5px;top:426.00px;font-size:13px;line-height:13px;color:#000">13</span>
<span class="r" style="right:743.5px;top:426.00px;font-size:13px;line-height:13px;color:#000">13</span>
<span class="f" style="left:28px;top:446.00px;font-size:13px;line-height:13px;color:#000;">8090</span>
<span class="r" style="right:826.5px;top:446.00px;font-size:13px;line-height:13px;color:#000">315</span>
<span class="r" style="right:743.5px;top:446.00px;font-size:13px;line-height:13px;color:#000">315</span>
<span class="f" style="left:28px;top:466.00px;font-size:13px;line-height:13px;color:#000;">8089</span>
<span class="r" style="right:922.5px;top:466.00px;font-size:13px;line-height:13px;color:#000">48</span>
<span class="r" style="right:874.5px;top:466.00px;font-size:13px;line-height:13px;color:#000">32</span>
<span class="r" style="right:826.5px;top:466.00px;font-size:13px;line-height:13px;color:#000">29</span>
<span class="r" style="right:743.5px;top:466.00px;font-size:13px;line-height:13px;color:#000">109</span>
<span class="f" style="left:28px;top:486.00px;font-size:13px;line-height:13px;color:#000;">8088</span>
<span class="r" style="right:922.5px;top:486.00px;font-size:13px;line-height:13px;color:#000">184</span>
<span class="r" style="right:874.5px;top:486.00px;font-size:13px;line-height:13px;color:#000">228</span>
<span class="r" style="right:826.5px;top:486.00px;font-size:13px;line-height:13px;color:#000">135</span>
<span class="r" style="right:743.5px;top:486.00px;font-size:13px;line-height:13px;color:#000">547</span>
<span class="f" style="left:28px;top:506.00px;font-size:13px;line-height:13px;color:#000;">8087</span>
<span class="r" style="right:970.5px;top:506.00px;font-size:13px;line-height:13px;color:#000">185</span>
<span class="r" style="right:922.5px;top:506.00px;font-size:13px;line-height:13px;color:#000">123</span>
<span class="r" style="right:874.5px;top:506.00px;font-size:13px;line-height:13px;color:#000">38</span>
<span class="r" style="right:826.5px;top:506.00px;font-size:13px;line-height:13px;color:#000">128</span>
<span class="r" style="right:743.5px;top:506.00px;font-size:13px;line-height:13px;color:#000">474</span>
<span class="f" style="left:28px;top:526.00px;font-size:13px;line-height:13px;color:#000;">8086</span>
<span class="r" style="right:970.5px;top:526.00px;font-size:13px;line-height:13px;color:#000">965</span>
<span class="r" style="right:922.5px;top:526.00px;font-size:13px;line-height:13px;color:#000">55</span>
<span class="r" style="right:874.5px;top:526.00px;font-size:13px;line-height:13px;color:#000">49</span>
<span class="r" style="right:826.5px;top:526.00px;font-size:13px;line-height:13px;color:#000">24</span>
<span class="r" style="right:743.5px;top:526.00px;font-size:13px;line-height:13px;color:#000">1 093</span>
<span class="f" style="left:28px;top:546.00px;font-size:13px;line-height:13px;color:#000;">8084</span>
<span class="r" style="right:1025.5px;top:546.00px;font-size:13px;line-height:13px;color:#000">1 258</span>
<span class="r" style="right:970.5px;top:546.00px;font-size:13px;line-height:13px;color:#000">2 872</span>
<span class="r" style="right:922.5px;top:546.00px;font-size:13px;line-height:13px;color:#000">416</span>
<span class="r" style="right:874.5px;top:546.00px;font-size:13px;line-height:13px;color:#000">340</span>
<span class="r" style="right:826.5px;top:546.00px;font-size:13px;line-height:13px;color:#000">182</span>
<span class="r" style="right:743.5px;top:546.00px;font-size:13px;line-height:13px;color:#000">5 068</span>
<span class="f" style="left:28px;top:566.00px;font-size:13px;line-height:13px;color:#000;">8083</span>
<span class="r" style="right:1025.5px;top:566.00px;font-size:13px;line-height:13px;color:#000">848</span>
<span class="r" style="right:970.5px;top:566.00px;font-size:13px;line-height:13px;color:#000">3 488</span>
<span class="r" style="right:922.5px;top:566.00px;font-size:13px;line-height:13px;color:#000">617</span>
<span class="r" style="right:874.5px;top:566.00px;font-size:13px;line-height:13px;color:#000">751</span>
<span class="r" style="right:826.5px;top:566.00px;font-size:13px;line-height:13px;color:#000">519</span>
<span class="r" style="right:743.5px;top:566.00px;font-size:13px;line-height:13px;color:#000">6 223</span>
<span class="f" style="left:28px;top:586.00px;font-size:13px;line-height:13px;color:#000;">8082</span>
<span class="r" style="right:1025.5px;top:586.00px;font-size:13px;line-height:13px;color:#000">531</span>
<span class="r" style="right:970.5px;top:586.00px;font-size:13px;line-height:13px;color:#000">4 965</span>
<span class="r" style="right:922.5px;top:586.00px;font-size:13px;line-height:13px;color:#000">368</span>
<span class="r" style="right:874.5px;top:586.00px;font-size:13px;line-height:13px;color:#000">387</span>
<span class="r" style="right:826.5px;top:586.00px;font-size:13px;line-height:13px;color:#000">460</span>
<span class="r" style="right:743.5px;top:586.00px;font-size:13px;line-height:13px;color:#000">6 711</span>
<span class="f" style="left:28px;top:606.00px;font-size:13px;line-height:13px;color:#000;">8081</span>
<span class="r" style="right:1025.5px;top:606.00px;font-size:13px;line-height:13px;color:#000">1 054</span>
<span class="r" style="right:970.5px;top:606.00px;font-size:13px;line-height:13px;color:#000">3 464</span>
<span class="r" style="right:922.5px;top:606.00px;font-size:13px;line-height:13px;color:#000">801</span>
<span class="r" style="right:874.5px;top:606.00px;font-size:13px;line-height:13px;color:#000">714</span>
<span class="r" style="right:826.5px;top:606.00px;font-size:13px;line-height:13px;color:#000">410</span>
<span class="r" style="right:743.5px;top:606.00px;font-size:13px;line-height:13px;color:#000">6 443</span>
<span class="f" style="left:28px;top:626.00px;font-size:13px;line-height:13px;color:#000;">8080</span>
<span class="r" style="right:1025.5px;top:626.00px;font-size:13px;line-height:13px;color:#000">335</span>
<span class="r" style="right:970.5px;top:626.00px;font-size:13px;line-height:13px;color:#000">1 634</span>
<span class="r" style="right:922.5px;top:626.00px;font-size:13px;line-height:13px;color:#000">309</span>
<span class="r" style="right:874.5px;top:626.00px;font-size:13px;line-height:13px;color:#000">433</span>
<span class="r" style="right:826.5px;top:626.00px;font-size:13px;line-height:13px;color:#000">298</span>
<span class="r" style="right:743.5px;top:626.00px;font-size:13px;line-height:13px;color:#000">3 009</span>
<span class="f" style="left:28px;top:646.00px;font-size:13px;line-height:13px;color:#000;">8079</span>
<span class="r" style="right:1025.5px;top:646.00px;font-size:13px;line-height:13px;color:#000">675</span>
<span class="r" style="right:970.5px;top:646.00px;font-size:13px;line-height:13px;color:#000">1 430</span>
<span class="r" style="right:922.5px;top:646.00px;font-size:13px;line-height:13px;color:#000">199</span>
<span class="r" style="right:874.5px;top:646.00px;font-size:13px;line-height:13px;color:#000">187</span>
<span class="r" style="right:826.5px;top:646.00px;font-size:13px;line-height:13px;color:#000">112</span>
<span class="r" style="right:743.5px;top:646.00px;font-size:13px;line-height:13px;color:#000">2 603</span>
<span class="f" style="left:28px;top:666.00px;font-size:13px;line-height:13px;color:#000;">8078</span>
<span class="r" style="right:1025.5px;top:666.00px;font-size:13px;line-height:13px;color:#000">105</span>
<span class="r" style="right:970.5px;top:666.00px;font-size:13px;line-height:13px;color:#000">599</span>
<span class="r" style="right:922.5px;top:666.00px;font-size:13px;line-height:13px;color:#000">57</span>
<span class="r" style="right:874.5px;top:666.00px;font-size:13px;line-height:13px;color:#000">71</span>
<span class="r" style="right:826.5px;top:666.00px;font-size:13px;line-height:13px;color:#000">25</span>
<span class="r" style="right:743.5px;top:666.00px;font-size:13px;line-height:13px;color:#000">807</span>
<div style="position:absolute;left:739px;top:520px;width:70px;height:23px;border:2px solid #217346;box-sizing:border-box"></div>
<div style="position:absolute;left:804px;top:538px;width:5px;height:5px;background:#217346;border:1px solid #fff;box-sizing:content-box"></div>
<div style="position:absolute;left:1345px;top:262px;width:21px;height:408px;background:#E6E6E6"></div>
<div style="position:absolute;left:1344px;top:282px;width:1px;height:388px;background:#ABABAB"></div>
<div style="position:absolute;left:1348px;top:264px;width:15px;height:15px;background:#fff;border:1px solid #ABABAB;box-sizing:border-box"></div>
<svg style="position:absolute;left:1351px;top:269px;" width="9" height="5" viewBox="0 0 9 5"><path d="M0 5 H9 L4.5 0 Z" fill="#777"></path></svg>
<div style="position:absolute;left:1348px;top:385px;width:15px;height:271px;background:#D8D8D8"></div>
<div style="position:absolute;left:1348px;top:279px;width:15px;height:106px;background:#fff;border:1px solid #ABABAB;box-sizing:border-box"></div>
<div style="position:absolute;left:1348px;top:656px;width:15px;height:14px;background:#fff;border:1px solid #ABABAB;box-sizing:border-box"></div>
<svg style="position:absolute;left:1351px;top:661px;" width="9" height="5" viewBox="0 0 9 5"><path d="M0 0 H9 L4.5 5 Z" fill="#777"></path></svg>
<div style="position:absolute;left:0px;top:670px;width:1345px;height:1px;background:#ABABAB"></div>
<div style="position:absolute;left:0px;top:671px;width:1366px;height:27px;background:#E6E6E6"></div>
<svg style="position:absolute;left:26px;top:680px;" width="6" height="7" viewBox="0 0 6 7"><path d="M6 0 V7 L0 3.5 Z" fill="#BDBDBD"></path></svg>
<svg style="position:absolute;left:55px;top:680px;" width="6" height="7" viewBox="0 0 6 7"><path d="M0 0 V7 L6 3.5 Z" fill="#BDBDBD"></path></svg>
<div style="position:absolute;left:100px;top:670px;width:60px;height:25px;background:#fff;border-left:1px solid #ABABAB;border-right:1px solid #ABABAB;box-sizing:border-box"></div>
<div style="position:absolute;left:100px;top:693px;width:60px;height:2px;background:#217346"></div>
<span class="f" style="left: 112px; top: 678px; font-size: 13px; line-height: 13px; color: rgb(33, 115, 70); font-weight: bold; transform: scaleX(0.9354);">Лист1</span>
<svg style="position:absolute;left:192px;top:675px;" width="18" height="18" viewBox="0 0 18 18"><circle cx="9" cy="9" r="7.5" fill="none" stroke="#777" stroke-width="1.2"></circle><path d="M9 5 V13 M5 9 H13" stroke="#555" stroke-width="1.8"></path></svg>
<div style="position:absolute;left:819px;top:679px;width:2px;height:2px;background:#A8A8A8"></div>
<div style="position:absolute;left:819px;top:683px;width:2px;height:2px;background:#A8A8A8"></div>
<div style="position:absolute;left:819px;top:687px;width:2px;height:2px;background:#A8A8A8"></div>
<div style="position:absolute;left:836px;top:677px;width:509px;height:15px;background:#fff;border:1px solid #ABABAB;box-sizing:border-box"></div>
<div style="position:absolute;left:850px;top:677px;width:2px;height:15px;background:#ABABAB"></div>
<svg style="position:absolute;left:841px;top:681px;" width="5" height="7" viewBox="0 0 5 7"><path d="M5 0 V7 L0 3.5 Z" fill="#666"></path></svg>
<div style="position:absolute;left:1304px;top:678px;width:26px;height:13px;background:#D6D6D6"></div>
<div style="position:absolute;left:1330px;top:677px;width:15px;height:15px;background:#fff;border:1px solid #ABABAB;box-sizing:border-box"></div>
<svg style="position:absolute;left:1335px;top:681px;" width="5" height="7" viewBox="0 0 5 7"><path d="M0 0 V7 L5 3.5 Z" fill="#666"></path></svg>
<div style="position:absolute;left:0px;top:698px;width:1366px;height:1px;background:#C6C6C6"></div>
<div style="position:absolute;left:0px;top:699px;width:1366px;height:21px;background:#F0F0F0"></div>
<span class="f" style="left: 8px; top: 703.84px; font-size: 12px; line-height: 12px; color: rgb(68, 68, 68); transform: scaleX(0.9713);">Готово</span>
<div style="position:absolute;left:1075px;top:699px;width:37px;height:21px;background:#C8C8C8"></div>
<svg style="position:absolute;left:1085px;top:702px;" width="14" height="14" viewBox="0 0 14 14"><g fill="none" stroke="#666" stroke-width="1"><rect x="0.5" y="0.5" width="13" height="12"></rect><path d="M0.5 4.5 H13.5 M0.5 8.5 H13.5 M4.5 0.5 V12.5 M9 0.5 V12.5"></path></g></svg>
<svg style="position:absolute;left:1124px;top:702px;" width="15" height="14" viewBox="0 0 15 14"><g fill="none" stroke="#666" stroke-width="1"><rect x="0.5" y="0.5" width="13" height="12"></rect><rect x="3.5" y="3.5" width="7" height="6"></rect><path d="M5 5.5 H9 M5 7.5 H9"></path></g></svg>
<svg style="position:absolute;left:1162px;top:702px;" width="15" height="14" viewBox="0 0 15 14"><g fill="none" stroke="#666" stroke-width="1"><rect x="0.5" y="0.5" width="13" height="12"></rect><path d="M0.5 6.5 H6.5 V0.5 M9.5 0.5 V6.5"></path></g></svg>
<div style="position:absolute;left:1193px;top:708px;width:7px;height:2px;background:#666"></div>
<div style="position:absolute;left:1203px;top:708px;width:100px;height:1px;background:#BBBBBB"></div>
<div style="position:absolute;left:1251px;top:703px;width:4px;height:11px;background:#666"></div>
<div style="position:absolute;left:1307px;top:708px;width:9px;height:2px;background:#666"></div>
<div style="position:absolute;left:1310.5px;top:704.5px;width:2px;height:9px;background:#666"></div>
<span class="f" style="left: 1331px; top: 702.84px; font-size: 12px; line-height: 12px; color: rgb(68, 68, 68); transform: scaleX(0.8794);">100%</span></body></html>
